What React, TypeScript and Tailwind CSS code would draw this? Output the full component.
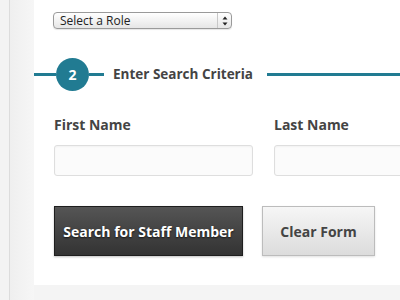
export default function App() {
  return (
    <div className="flex h-[300px] w-[400px] overflow-hidden bg-[#f4f4f4] font-['Open_Sans',sans-serif]">
      {/* left gutter */}
      <div className="w-[9px] shrink-0 bg-[#f3f3f3]" />
      <div className="w-px shrink-0 bg-[#dcdcdc]" />
      <div className="w-[24px] shrink-0 bg-gradient-to-r from-[#efefef] to-[#f6f6f6]" />

      <div className="flex min-w-0 flex-1 flex-col">
        <div className="h-[285px] shrink-0 bg-white pt-[12px]">
          {/* role select */}
          <div className="ml-[19px] flex h-[17px] w-[179px] items-center rounded-[4px] border border-[#9a9a9a] bg-gradient-to-b from-white to-[#e6e6e6] shadow-[0_1px_1px_rgba(0,0,0,0.1)]">
            <span className="flex-1 pl-[6px] text-[12px] leading-none text-[#222]">Select a Role</span>
            <div className="flex h-full w-[14px] flex-col items-center justify-center border-l border-[#c8c8c8]">
              <svg width="6" height="10" viewBox="0 0 6 10">
                <path d="M3 0.5L5.5 3.5H0.5Z" fill="#222" />
                <path d="M3 9.5L5.5 6.5H0.5Z" fill="#222" />
              </svg>
            </div>
          </div>

          {/* step header */}
          <div className="mt-[29px] flex h-[33px] items-center">
            <div className="h-[3px] w-[22px] bg-[#217b92]" />
            <div className="flex h-[33px] w-[33px] items-center justify-center rounded-full bg-[#217b92] text-[14px] font-bold text-white">
              2
            </div>
            <div className="h-[3px] w-[15px] bg-[#217b92]" />
            <span className="ml-[9px] whitespace-nowrap text-[13.5px] font-bold text-[#444]">Enter Search Criteria</span>
            <div className="ml-[14px] h-[3px] flex-1 bg-[#217b92]" />
          </div>

          {/* name fields */}
          <div className="mt-[24px] flex gap-[21px] pl-[20px]">
            <div className="flex w-[199px] shrink-0 flex-col">
              <label className="text-[14px] font-bold leading-[20px] text-[#444]">First Name</label>
              <div className="mt-[10px] h-[31px] rounded-[3px] border border-[#dedede] bg-[#fbfbfb] shadow-[inset_0_1px_2px_rgba(0,0,0,0.04)]" />
            </div>
            <div className="flex w-[199px] shrink-0 flex-col">
              <label className="text-[14px] font-bold leading-[20px] text-[#444]">Last Name</label>
              <div className="mt-[10px] h-[31px] rounded-[3px] border border-[#dedede] bg-[#fbfbfb] shadow-[inset_0_1px_2px_rgba(0,0,0,0.04)]" />
            </div>
          </div>

          {/* actions */}
          <div className="mt-[30px] flex gap-[19px] pl-[20px]">
            <button className="h-[50px] w-[189px] border border-[#1e1e1e] bg-gradient-to-b from-[#555] to-[#333] text-[14px] font-bold text-white [text-shadow:0_1px_2px_rgba(0,0,0,0.7)] shadow-[0_1px_2px_rgba(0,0,0,0.25)]">
              Search for Staff Member
            </button>
            <button className="h-[50px] w-[113px] border border-[#bcbcbc] bg-gradient-to-b from-[#f6f6f6] to-[#dcdcdc] text-[14px] font-bold text-[#444] shadow-[0_1px_2px_rgba(0,0,0,0.12)]">
              Clear Form
            </button>
          </div>
        </div>
      </div>
    </div>
  );
}
